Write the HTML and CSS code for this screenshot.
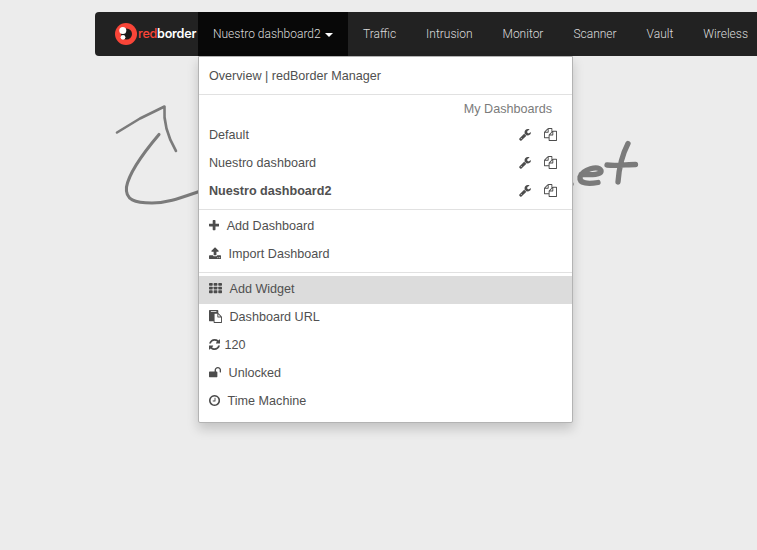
FILE: index.html
```html
<!DOCTYPE html>
<html lang="en">
<head>
<meta charset="utf-8">
<title>redBorder Manager</title>
<link rel="stylesheet" href="styles.css">
</head>
<body>
<svg class="sketch" width="757" height="550" viewBox="0 0 757 550" aria-hidden="true">
  <path class="stroke" d="M117 132.500L140 118.500L164.500 106.500C163 125 169 139 176 151"/>
  <path class="stroke thick" d="M159 134.500C145 151 129 173 126.500 187C125 200 135 203 152 203C170 203 185 196 205 189.500"/>
  <path class="brush" d="M581 174.500C592 175 602 175 601 170.500C598 165 583 169 580 177C579 184 589 184 598 182.500"/>
  <path class="brush" d="M607 165C617 166 627 164.500 635.500 164.500M628 143.500C622 155 619 168 618 182"/>
  <path class="brush" d="M566 185L571 184"/>
</svg>
<svg width="0" height="0" class="defs" aria-hidden="true">
  <symbol id="wrench" viewBox="64 0 1664 1792"><path d="M448 1472q0-26-19-45t-45-19-45 19-19 45 19 45 45 19 45-19 19-45zm644-420l-682 682q-37 37-90 37-52 0-91-37l-106-108q-38-36-38-90 0-53 38-91l681-681q39 98 114.500 173.500t173.500 114.500zm634-435q0 39-23 106-47 134-164.500 217.500t-258.500 83.500q-185 0-316.500-131.500t-131.500-316.500 131.500-316.500 316.500-131.500q58 0 121.500 16.500t107.500 46.500q16 11 16 28t-16 28l-293 169v224l193 107q5-3 79-48.500t135.500-81 70.500-35.500q15 0 23.500 10t8.500 25z"/></symbol>
  <symbol id="files" viewBox="0 0 1792 1792"><path d="M1696 384q40 0 68 28t28 68v1216q0 40-28 68t-68 28h-960q-40 0-68-28t-28-68v-288h-544q-40 0-68-28t-28-68v-672q0-40 20-88t48-76l408-408q28-28 76-48t88-20h416q40 0 68 28t28 68v328q68-40 128-40h416zm-544 213l-299 299h299v-299zm-640-384l-299 299h299v-299zm196 647l316-316v-416h-384v416q0 40-28 68t-68 28h-416v640h512v-256q0-40 20-88t48-76zm956 804v-1152h-384v416q0 40-28 68t-68 28h-416v640h896z"/></symbol>
</svg>

<nav class="navbar">
  <a class="brand" href="#">
    <svg width="24" height="24" viewBox="0 0 24 24" aria-hidden="true">
      <circle cx="12" cy="12" r="11" fill="#f94538"/>
      <circle cx="12.500" cy="12" r="5.500" fill="#1b1b1b"/>
      <circle cx="8.800" cy="8.600" r="3.500" fill="#fff"/>
      <circle cx="9" cy="15.300" r="2.400" fill="#fff"/>
    </svg>
    <span class="wordmark"><span class="red">red</span>border</span>
  </a>
  <a class="nav-item active" href="#">Nuestro dashboard2<span class="caret"></span></a>
  <a class="nav-item" href="#">Traffic</a>
  <a class="nav-item" href="#">Intrusion</a>
  <a class="nav-item" href="#">Monitor</a>
  <a class="nav-item" href="#">Scanner</a>
  <a class="nav-item" href="#">Vault</a>
  <a class="nav-item" href="#">Wireless</a>
</nav>

<div class="menu">
  <a class="row" href="#">Overview | redBorder Manager</a>
  <div class="divider"></div>
  <div class="header">My Dashboards</div>
  <div class="row"><span class="label">Default</span><svg class="icon wrench"><use href="#wrench"/></svg><svg class="icon files"><use href="#files"/></svg></div>
  <div class="row"><span class="label">Nuestro dashboard</span><svg class="icon wrench"><use href="#wrench"/></svg><svg class="icon files"><use href="#files"/></svg></div>
  <div class="row"><span class="label current">Nuestro dashboard2</span><svg class="icon wrench"><use href="#wrench"/></svg><svg class="icon files"><use href="#files"/></svg></div>
  <div class="divider snug"></div>
  <a class="row action" href="#"><svg class="icon w1408" viewBox="192 0 1408 1792"><path d="M1600 736v192q0 40-28 68t-68 28h-416v416q0 40-28 68t-68 28h-192q-40 0-68-28t-28-68v-416h-416q-40 0-68-28t-28-68v-192q0-40 28-68t68-28h416v-416q0-40 28-68t68-28h192q40 0 68 28t28 68v416h416q40 0 68 28t28 68z"/></svg>Add Dashboard</a>
  <a class="row action" href="#"><svg class="icon w1664" viewBox="64 0 1664 1792"><path d="M1344 1472q0-26-19-45t-45-19-45 19-19 45 19 45 45 19 45-19 19-45zm256 0q0-26-19-45t-45-19-45 19-19 45 19 45 45 19 45-19 19-45zm128-224v320q0 40-28 68t-68 28h-1472q-40 0-68-28t-28-68v-320q0-40 28-68t68-28h427q21 56 70.500 92t110.500 36h256q61 0 110.500-36t70.500-92h427q40 0 68 28t28 68zm-325-648q-17 40-59 40h-256v448q0 26-19 45t-45 19h-256q-26 0-45-19t-19-45v-448h-256q-42 0-59-40-17-39 14-69l448-448q18-19 45-19t45 19l448 448q31 30 14 69z"/></svg>Import Dashboard</a>
  <div class="divider"></div>
  <a class="row action raised hover" href="#"><svg class="icon w1792" viewBox="0 0 1792 1792"><g><rect x="0" y="128" width="512" height="384" rx="96"/><rect x="640" y="128" width="512" height="384" rx="96"/><rect x="1280" y="128" width="512" height="384" rx="96"/><rect x="0" y="640" width="512" height="384" rx="96"/><rect x="640" y="640" width="512" height="384" rx="96"/><rect x="1280" y="640" width="512" height="384" rx="96"/><rect x="0" y="1152" width="512" height="384" rx="96"/><rect x="640" y="1152" width="512" height="384" rx="96"/><rect x="1280" y="1152" width="512" height="384" rx="96"/></g></svg>Add Widget</a>
  <a class="row action raised" href="#"><svg class="icon w1792" viewBox="0 0 1792 1792"><path d="M768 1664h896v-640h-416q-40 0-68-28t-28-68v-416h-384v1152zm256-1440v-64q0-13-9.500-22.500t-22.500-9.500h-704q-13 0-22.500 9.500t-9.500 22.500v64q0 13 9.500 22.500t22.500 9.500h704q13 0 22.500-9.500t9.500-22.500zm256 672h299l-299-299v299zm512 128v672q0 40-28 68t-68 28h-960q-40 0-68-28t-28-68v-160h-544q-40 0-68-28t-28-68v-1344q0-40 28-68t68-28h1088q40 0 68 28t28 68v328q21 13 36 28l408 408q28 28 48 76t20 88z"/></svg>Dashboard URL</a>
  <a class="row action raised tight" href="#"><svg class="icon w1536" viewBox="128 0 1536 1792"><path d="M1639 1056q0 5-1 7-64 268-268 434.500t-478 166.500q-146 0-282.500-55t-243.500-157l-129 129q-19 19-45 19t-45-19-19-45v-448q0-26 19-45t45-19h448q26 0 45 19t19 45-19 45l-137 137q71 66 161 102t187 36q134 0 250-65t186-179q11-17 53-117 8-23 30-23h192q13 0 22.500 9.500t9.500 22.500zm25-800v448q0 26-19 45t-45 19h-448q-26 0-45-19t-19-45 19-45l138-138q-148-137-349-137-134 0-250 65t-186 179q-11 17-53 117-8 23-30 23h-199q-13 0-22.500-9.500t-9.500-22.500v-7q65-268 270-434.500t480-166.500q146 0 284 55.500t245 156.500l130-129q19-19 45-19t45 19 19 45z"/></svg>120</a>
  <a class="row action raised" href="#"><svg class="icon w1664" viewBox="64 0 1664 1792"><path d="M1728 576v256q0 26-19 45t-45 19h-64q-26 0-45-19t-19-45v-256q0-106-75-181t-181-75-181 75-75 181v192h96q40 0 68 28t28 68v576q0 40-28 68t-68 28h-960q-40 0-68-28t-28-68v-576q0-40 28-68t68-28h672v-192q0-185 131.500-316.500t316.500-131.500 316.500 131.500 131.500 316.500z"/></svg>Unlocked</a>
  <a class="row action raised" href="#"><svg class="icon w1536" viewBox="128 0 1536 1792"><path d="M1024 544v448q0 14-9 23t-23 9h-320q-14 0-23-9t-9-23v-64q0-14 9-23t23-9h224v-352q0-14 9-23t23-9h64q14 0 23 9t9 23zm416 352q0-148-73-273t-198-198-273-73-273 73-198 198-73 273 73 273 198 198 273 73 273-73 198-198 73-273zm224 0q0 209-103 385.500t-279.500 279.500-385.500 103-385.500-103-279.500-279.500-103-385.500 103-385.500 279.500-279.500 385.500-103 385.500 103 279.500 279.500 103 385.500z"/></svg>Time Machine</a>
</div>
</body>
</html>
```
FILE: styles.css
```css
* { box-sizing: border-box; }
body {
  margin: 0;
  padding-top: 12px;
  height: 550px;
  overflow: hidden;
  background: #ececec;
  font: 12.6px/28px "Liberation Sans", Arial, sans-serif;
  color: #505050;
}
a { color: inherit; text-decoration: none; }
.defs { position: absolute; }
.sketch { position: absolute; top: 0; left: 0; }
.stroke, .brush { fill: none; stroke: #7b7b7b; stroke-linecap: round; stroke-linejoin: round; }
.stroke { stroke-width: 2.6; }
.thick { stroke-width: 3.1; }
.brush { stroke-width: 5.3; }

.navbar {
  position: relative;
  display: flex;
  height: 44px;
  margin-left: 95px;
  background: #222;
  border-radius: 4px 0 0 4px;
  overflow: hidden;
}
.brand {
  display: flex;
  align-items: center;
  flex: none;
  width: 103px;
  padding-left: 19px;
}
.wordmark {
  font: 600 12.6px/24px "Inter", sans-serif;
  letter-spacing: -0.25px;
  color: #fff;
}
.red { color: #f94538; font-weight: 500; }
.nav-item {
  flex: none;
  padding: 0 15px;
  font: 300 12px/44px Roboto, sans-serif;
  white-space: nowrap;
  color: #dcdcdc;
}
.active { width: 150px; background: #080808; }
.caret {
  display: inline-block;
  margin-left: 4px;
  vertical-align: middle;
  border-top: 4px solid #fff;
  border-left: 4px solid transparent;
  border-right: 4px solid transparent;
}

.menu {
  position: relative;
  width: 375px;
  height: 367px;
  margin-left: 198px;
  padding: 5px 0;
  background: #fff;
  border: 1px solid #b3b3b3;
  border-radius: 0 0 2px 2px;
  box-shadow: 0 6px 12px rgba(0, 0, 0, .175);
}
.row {
  display: flex;
  align-items: center;
  height: 28px;
  padding: 0 15px 0 10px;
}
.raised { padding-bottom: 2px; }
.label { flex: 1; }
.current { font-weight: bold; }
.hover { background: #dcdcdc; }
.divider { height: 1px; margin: 4px 0 3px; background: #e1e1e1; }
.snug { margin-bottom: 2px; }
.header { height: 23px; padding-right: 20px; line-height: 22px; text-align: right; color: #7b7b7b; }
.icon { flex: none; height: 13px; margin-bottom: 2px; fill: #4c4c4c; }
.wrench { width: 12px; margin-right: 13px; }
.files { width: 13px; }
.action .icon { margin-left: -0.3px; margin-right: 7.8px; }
.tight .icon { margin-right: 4.6px; }
.w1408 { width: 10.2px; }
.w1536 { width: 11.1px; }
.w1664 { width: 12.1px; }
.w1792 { width: 13px; }
```
